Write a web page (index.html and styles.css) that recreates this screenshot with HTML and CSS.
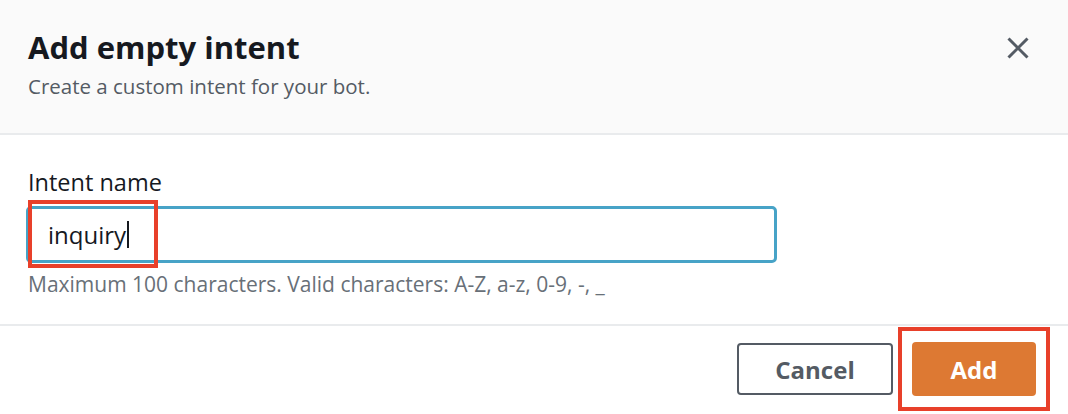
FILE: index.html
```html
<!DOCTYPE html>
<html lang="en">
<head>
<meta charset="utf-8">
<title>Add empty intent</title>
<link rel="stylesheet" href="styles.css">
</head>
<body>
<div class="modal">
  <header class="modal-header">
    <div class="heading">
      <h1 class="title">Add empty intent</h1>
      <p class="subtitle">Create a custom intent for your bot.</p>
    </div>
    <button class="close" aria-label="Close">
      <svg width="22" height="22" viewBox="0 0 22 22"><path d="M1.5 1.5 L20.5 20.5 M20.5 1.5 L1.5 20.5" stroke="#545b64" stroke-width="3" fill="none"/></svg>
    </button>
  </header>
  <section class="modal-body">
    <div class="label">Intent name</div>
    <div class="input"><span class="value">inquiry</span><span class="caret"></span></div>
    <p class="hint">Maximum 100 characters. Valid characters: A-Z, a-z, 0-9, -, _</p>
  </section>
  <footer class="modal-footer">
    <button class="btn btn-secondary">Cancel</button>
    <button class="btn btn-primary">Add</button>
  </footer>
  <div class="annot annot-input"></div>
  <div class="annot annot-add"></div>
</div>
</body>
</html>
```
FILE: styles.css
```css
* { box-sizing: border-box; }
html, body { margin: 0; padding: 0; background: #ffffff; }
body { font-family: "Open Sans", "Noto Sans", sans-serif; color: #16191f; }

.modal { position: relative; width: 1068px; height: 414px; overflow: hidden; display: flex; flex-direction: column; }

.modal-header {
  background: #fafafa;
  border-bottom: 2px solid #e9ebed;
  display: flex;
  justify-content: space-between;
  align-items: flex-start;
  padding: 29px 39px 0 28px;
  height: 135px;
}
.title { margin: 0; font-size: 31px; line-height: 36px; font-weight: 700; color: #16191f; }
.subtitle { margin: 7px 0 0; font-size: 20.5px; line-height: 28px; color: #545b64; }
.close { margin: 8px 0 0; padding: 0; border: 0; background: none; width: 22px; height: 22px; display: block; }
.close svg { display: block; }

.modal-body { padding: 33px 0 0 28px; height: 191px; border-bottom: 2px solid #e9ebed; }
.label { font-size: 23.5px; line-height: 28px; color: #16191f; }
.input {
  margin: 10px 0 0 -2px;
  width: 751px;
  height: 57px;
  border: 3px solid #47a3c7;
  border-radius: 5px;
  padding-left: 19px;
  display: flex;
  align-items: center;
  font-size: 24px;
  color: #16191f;
}
.caret { display: inline-block; width: 2px; height: 27px; background: #16191f; margin-left: 1px; }
.hint { margin: 7px 0 0; font-size: 21px; line-height: 28px; color: #687078; }

.modal-footer { display: flex; justify-content: flex-end; align-items: center; gap: 19px; padding: 16px 32px 0 0; height: 70px; }
.btn { font-family: inherit; font-weight: 700; font-size: 24px; border-radius: 4px; cursor: pointer; padding: 0; }
.btn-secondary { width: 156px; height: 52px; background: #fff; border: 2px solid #545b64; color: #545b64; }
.btn-primary { width: 124px; height: 54px; background: #dd7933; border: 0; color: #fff; }

.annot { position: absolute; border: 4px solid #e8402a; }
.annot-input { left: 28px; top: 200px; width: 130px; height: 68px; }
.annot-add { left: 898px; top: 327px; width: 152px; height: 84px; }
```
